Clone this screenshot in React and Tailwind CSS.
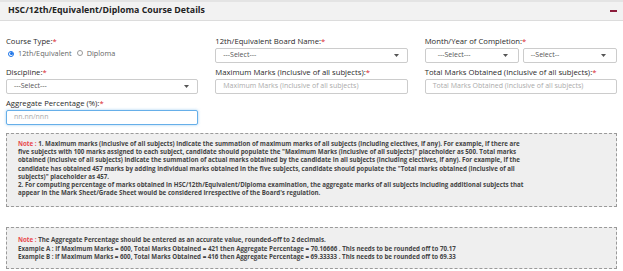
const Req = () => <span className="text-[#d9232d]">*</span>;

const Label = ({ children }) => (
    <div className="text-[7.7px] leading-[10px] text-[#2a2a2a] mb-[2px] whitespace-nowrap">
        {children}
        <Req />
    </div>
);

const Caret = () => (
    <svg width="5" height="3" viewBox="0 0 5 3" className="shrink-0">
        <path d="M0 0 L5 0 L2.5 3 Z" fill="#555" />
    </svg>
);

const Select = ({ text = '---Select---', pad = 'pl-[7px] pr-[8px]' }) => (
    <div className={`h-[15px] flex items-center justify-between border border-[#ccc] rounded-[2px] bg-white ${pad} text-[7px] text-[#555]`}>
        <span>{text}</span>
        <Caret />
    </div>
);

const Input = ({ placeholder, focused }) => (
    <div
        className={`h-[15px] flex items-center border rounded-[2px] bg-white px-[7px] text-[7px] text-[#aaa] whitespace-nowrap overflow-hidden ${
            focused ? 'border-[#66afe9] shadow-[0_0_3px_rgba(102,175,233,0.6)]' : 'border-[#ccc]'
        }`}
    >
        {placeholder}
    </div>
);

const Radio = ({ checked }) => (
    <span
        className={`w-[6px] h-[6px] rounded-full border inline-flex items-center justify-center shrink-0 ${
            checked ? 'border-[#1a73e8]' : 'border-[#999]'
        }`}
    >
        {checked && <span className="w-[3px] h-[3px] rounded-full bg-[#1a73e8]" />}
    </span>
);

const NoteTag = () => <span className="text-[#e8474d]">Note : </span>;

const App = () => {
    const note1 = [
        '1. Maximum marks (inclusive of all subjects) indicate the summation of maximum marks of all subjects (including electives, if any). For example, if there are',
        'five subjects with 100 marks assigned to each subject, candidate should populate the "Maximum Marks (inclusive of all subjects)" placeholder as 500. Total marks',
        'obtained (inclusive of all subjects) indicate the summation of actual marks obtained by the candidate in all subjects (including electives, if any). For example, if the',
        'candidate has obtained 457 marks by adding individual marks obtained in the five subjects, candidate should populate the "Total marks obtained (inclusive of all',
        'subjects)" placeholder as 457.',
        '2. For computing percentage of marks obtained in HSC/12th/Equivalent/Diploma examination, the aggregate marks of all subjects including additional subjects that',
        "appear in the Mark Sheet/Grade Sheet would be considered irrespective of the Board's regulation."
    ];

    const note2 = [
        'The Aggregate Percentage should be entered as an accurate value, rounded-off to 2 decimals.',
        'Example A : If Maximum Marks = 600, Total Marks Obtained = 421 then Aggregate Percentage = 70.16666 . This needs to be rounded off to 70.17',
        'Example B : If Maximum Marks = 600, Total Marks Obtained = 416 then Aggregate Percentage = 69.33333 . This needs to be rounded off to 69.33'
    ];

    return (
        <div className="w-[623px] h-[271px] bg-white overflow-hidden font-['Open_Sans',sans-serif]">
            {/* Header */}
            <div className="h-[21px] flex items-center justify-between bg-[#f2f2f2] border-t-[2px] border-t-[#e4e4e4] border-b border-b-[#dcdcdc] pl-[8px] pr-[6px]">
                <h3 className="text-[8.8px] font-bold text-[#222]">HSC/12th/Equivalent/Diploma Course Details</h3>
                <div className="w-[7px] h-[2px] bg-[#8c1d3c]" />
            </div>

            {/* Form */}
            <div className="px-[6px] pt-[15px]">
                <div className="grid grid-cols-3 gap-x-[17px] gap-y-[4px]">
                    <div>
                        <Label>Course Type:</Label>
                        <div className="h-[11px] flex items-center pl-[2px] text-[7.3px] text-[#666] whitespace-nowrap">
                            <Radio checked />
                            <span className="ml-[4px]">12th/Equivalent</span>
                            <span className="ml-[5px]"><Radio /></span>
                            <span className="ml-[4px]">Diploma</span>
                        </div>
                    </div>
                    <div>
                        <Label>12th/Equivalent Board Name:</Label>
                        <Select />
                    </div>
                    <div>
                        <Label>Month/Year of Completion:</Label>
                        <div className="flex gap-[4px]">
                            <div className="flex-1">
                                <Select text="---Select---" pad="pl-[12px] pr-[10px]" />
                            </div>
                            <div className="flex-1">
                                <Select text="--Select--" pad="pl-[7px] pr-[10px]" />
                            </div>
                        </div>
                    </div>

                    <div>
                        <Label>Discipline:</Label>
                        <Select />
                    </div>
                    <div>
                        <Label>Maximum Marks (Inclusive of all subjects):</Label>
                        <Input placeholder="Maximum Marks (Inclusive of all subjects)" />
                    </div>
                    <div>
                        <Label>Total Marks Obtained (Inclusive of all subjects):</Label>
                        <Input placeholder="Total Marks Obtained (Inclusive of all subjects)" />
                    </div>

                    <div>
                        <Label>Aggregate Percentage (%):</Label>
                        <Input placeholder="nn.nn/nnn" focused />
                    </div>
                </div>

                {/* Note 1 */}
                <div className="mt-[8px] border border-dashed border-[#9a9a9a] bg-[#efefef] pl-[11px] pr-[6px] pt-[6px] pb-[9px] text-[6.2px] leading-[8.2px] font-bold text-[#444]">
                    {note1.map((line, i) => (
                        <div key={i} className="whitespace-nowrap">
                            {i === 0 && <NoteTag />}
                            {line}
                        </div>
                    ))}
                </div>

                {/* Note 2 */}
                <div className="mt-[20px] border border-dashed border-[#9a9a9a] bg-[#efefef] pl-[11px] pr-[6px] pt-[8px] pb-[7px] text-[6.2px] leading-[8.2px] font-bold text-[#444]">
                    {note2.map((line, i) => (
                        <div key={i} className="whitespace-nowrap">
                            {i === 0 && <NoteTag />}
                            {line}
                        </div>
                    ))}
                </div>
            </div>
        </div>
    );
};

export default App;
